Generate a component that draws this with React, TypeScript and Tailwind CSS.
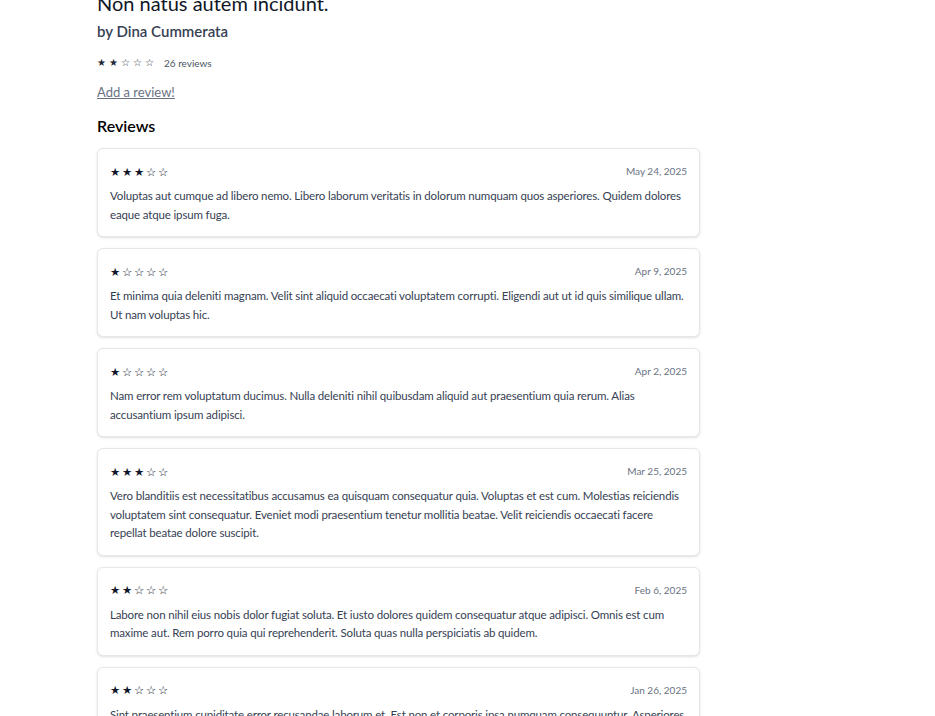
import React from "react";

const reviews = [
  { rating: 3, date: "May 24, 2025", text: "Voluptas aut cumque ad libero nemo. Libero laborum veritatis in dolorum numquam quos asperiores. Quidem dolores eaque atque ipsum fuga." },
  { rating: 1, date: "Apr 9, 2025", text: "Et minima quia deleniti magnam. Velit sint aliquid occaecati voluptatem corrupti. Eligendi aut ut id quis similique ullam. Ut nam voluptas hic." },
  { rating: 1, date: "Apr 2, 2025", text: "Nam error rem voluptatum ducimus. Nulla deleniti nihil quibusdam aliquid aut praesentium quia rerum. Alias accusantium ipsum adipisci." },
  { rating: 3, date: "Mar 25, 2025", text: "Vero blanditiis est necessitatibus accusamus ea quisquam consequatur quia. Voluptas et est cum. Molestias reiciendis voluptatem sint consequatur. Eveniet modi praesentium tenetur mollitia beatae. Velit reiciendis occaecati facere repellat beatae dolore suscipit." },
  { rating: 2, date: "Feb 6, 2025", text: "Labore non nihil eius nobis dolor fugiat soluta. Et iusto dolores quidem consequatur atque adipisci. Omnis est cum maxime aut. Rem porro quia qui reprehenderit. Soluta quas nulla perspiciatis ab quidem." },
  { rating: 2, date: "Jan 26, 2025", text: "Sint praesentium cupiditate error recusandae laborum et. Est non et corporis ipsa numquam consequuntur. Asperiores quia voluptatem dolorem nam ut. Quasi illum eos aut et." },
];

function Stars({ rating, size }: { rating: number; size: string }) {
  return (
    <div className="flex items-center" style={{ fontFamily: '"DejaVu Sans", sans-serif' }}>
      {[0, 1, 2, 3, 4].map((i) => (
        <span key={i} className={`inline-block w-[12px] text-left ${size}`}>
          {i < rating ? "★" : "☆"}
        </span>
      ))}
    </div>
  );
}

export default function App() {
  return (
    <div className="min-h-screen bg-white" style={{ fontFamily: 'Lato, "Liberation Sans", Arial, sans-serif' }}>
      <div className="pl-[97px] -mt-[11px]">
        <div className="w-[603px]">
          <h1 className="text-[20px] leading-[28px] text-gray-900">Non natus autem incidunt.</h1>
          <div className="mt-[4px] text-[15px] leading-[20px] font-semibold text-gray-700">by Dina Cummerata</div>
          <div className="mt-[15px] flex items-center gap-[7px]">
            <div className="text-gray-800">
              <Stars rating={2} size="text-[10px] leading-[14px]" />
            </div>
            <span className="text-[10px] leading-[14px] text-gray-600">26 reviews</span>
          </div>
          <div className="mt-[9px]">
            <a href="#" className="text-[13px] leading-[18px] text-gray-500 underline">Add a review!</a>
          </div>
          <h2 className="mt-[12px] text-[16px] leading-[22px] font-semibold text-black">Reviews</h2>
          <div className="mt-[11px] flex flex-col gap-[11px]">
            {reviews.map((r, idx) => (
              <div key={idx} className="rounded-md border border-gray-200 bg-white px-3 pt-3 pb-3 shadow-sm">
                <div className="flex items-center justify-between h-[21px]">
                  <div className="text-slate-900">
                    <Stars rating={r.rating} size="text-[11.5px] leading-[14px]" />
                  </div>
                  <span className="text-[10px] text-gray-500">{r.date}</span>
                </div>
                <p className="mt-[5px] text-[11.5px] leading-[18.5px] tracking-[-0.15px] text-gray-700">{r.text}</p>
              </div>
            ))}
          </div>
        </div>
      </div>
    </div>
  );
}
